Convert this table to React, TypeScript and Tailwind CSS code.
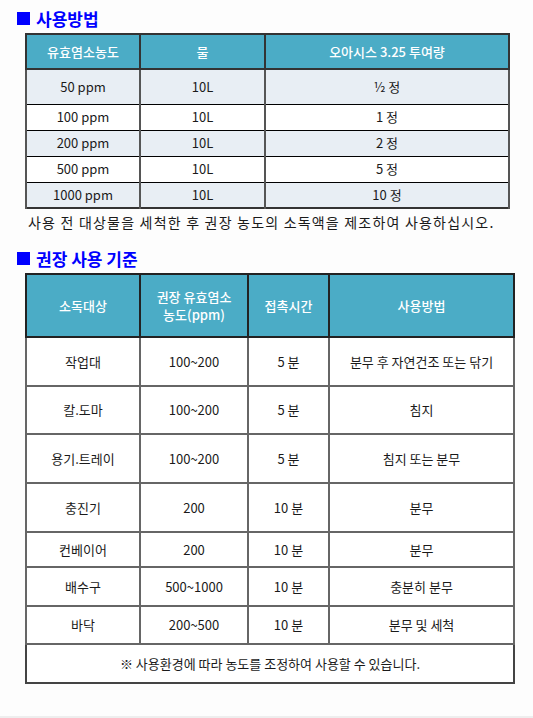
const dosage = [
  { ppm: "50 ppm", water: "10L", amount: "½ 정", shade: true, h: "h-[35px]" },
  { ppm: "100 ppm", water: "10L", amount: "1 정", shade: false, h: "h-[26px]" },
  { ppm: "200 ppm", water: "10L", amount: "2 정", shade: true, h: "h-[26px]" },
  { ppm: "500 ppm", water: "10L", amount: "5 정", shade: false, h: "h-[26px]" },
  { ppm: "1000 ppm", water: "10L", amount: "10 정", shade: true, h: "h-[26px]" },
];

const standards = [
  { target: "작업대", conc: "100~200", time: "5 분", method: "분무 후 자연건조 또는 닦기", h: "h-[49px]" },
  { target: "칼.도마", conc: "100~200", time: "5 분", method: "침지", h: "h-[48px]" },
  { target: "용기.트레이", conc: "100~200", time: "5 분", method: "침지 또는 분무", h: "h-[49px]" },
  { target: "충진기", conc: "200", time: "10 분", method: "분무", h: "h-[49px]" },
  { target: "컨베이어", conc: "200", time: "10 분", method: "분무", h: "h-[35px]" },
  { target: "배수구", conc: "500~1000", time: "10 분", method: "충분히 분무", h: "h-[39px]" },
  { target: "바닥", conc: "200~500", time: "10 분", method: "분무 및 세척", h: "h-[38px]" },
];

function SectionTitle({ children }: { children: React.ReactNode }) {
  return (
    <h2 className="flex items-center gap-[6px] pl-[17px] text-[17px] font-bold leading-none text-[#0000ff]">
      <span className="inline-block h-[13px] w-[13px] bg-[#0000ff]" />
      <span>{children}</span>
    </h2>
  );
}

export default function App() {
  return (
    <div
      className="relative h-[718px] w-[533px] overflow-hidden bg-[#fdfdfd] text-[#1a1a1a]"
      style={{ fontFamily: '"Noto Sans CJK KR", "Noto Sans", sans-serif' }}
    >
      <div className="pt-[10px]">
        <SectionTitle>사용방법</SectionTitle>
      </div>

      {/* 사용방법 table */}
      <table className="ml-[25px] mt-[6px] w-[483px] table-fixed border-collapse border-2 border-[#333] text-center text-[13px]">
        <colgroup>
          <col className="w-[114px]" />
          <col className="w-[125px]" />
          <col className="w-[244px]" />
        </colgroup>
        <thead>
          <tr className="h-[35px] bg-[#4bacc6] text-white">
            <th className="border-2 border-[#333] font-medium">유효염소농도</th>
            <th className="border-2 border-[#333] font-medium">물</th>
            <th className="border-2 border-[#333] font-medium">오아시스 3.25 투여량</th>
          </tr>
        </thead>
        <tbody>
          {dosage.map((r) => (
            <tr key={r.ppm} className={`${r.h} ${r.shade ? "bg-[#e8eef4]" : "bg-white"}`}>
              <td className="border-x-2 border-y border-x-[#555] border-y-black">{r.ppm}</td>
              <td className="border-x-2 border-y border-x-[#555] border-y-black">{r.water}</td>
              <td className="border-x-2 border-y border-x-[#555] border-y-black">{r.amount}</td>
            </tr>
          ))}
        </tbody>
      </table>

      <p className="ml-[28px] mt-[3px] text-[14px] leading-[20px] tracking-[1.2px]">
        사용 전 대상물을 세척한 후 권장 농도의 소독액을 제조하여 사용하십시오.
      </p>

      <div className="mt-[18px]">
        <SectionTitle>권장 사용 기준</SectionTitle>
      </div>

      {/* 권장 사용 기준 table */}
      <table className="ml-[25px] mt-[6px] w-[488px] table-fixed border-collapse border-2 border-[#333] text-center text-[13px]">
        <colgroup>
          <col className="w-[114px]" />
          <col className="w-[108px]" />
          <col className="w-[81px]" />
          <col className="w-[185px]" />
        </colgroup>
        <thead>
          <tr className="h-[63px] bg-[#4bacc6] text-white">
            <th className="border-2 border-[#222] font-medium">소독대상</th>
            <th className="border-2 border-[#222] font-medium leading-[18px]">
              권장 유효염소
              <br />
              농도(ppm)
            </th>
            <th className="border-2 border-[#222] font-medium">접촉시간</th>
            <th className="border-2 border-[#222] font-medium">사용방법</th>
          </tr>
        </thead>
        <tbody>
          {standards.map((r) => (
            <tr key={r.target} className={`${r.h} bg-white`}>
              <td className="border-2 border-[#666]">{r.target}</td>
              <td className="border-2 border-[#666]">{r.conc}</td>
              <td className="border-2 border-[#666]">{r.time}</td>
              <td className="border-2 border-[#666]">{r.method}</td>
            </tr>
          ))}
          <tr className="h-[39px] bg-white">
            <td colSpan={4} className="border-2 border-[#444]">
              ※ 사용환경에 따라 농도를 조정하여 사용할 수 있습니다.
            </td>
          </tr>
        </tbody>
      </table>

      <div className="absolute bottom-0 left-0 h-[2px] w-full bg-[#eeeeee]" />
    </div>
  );
}
